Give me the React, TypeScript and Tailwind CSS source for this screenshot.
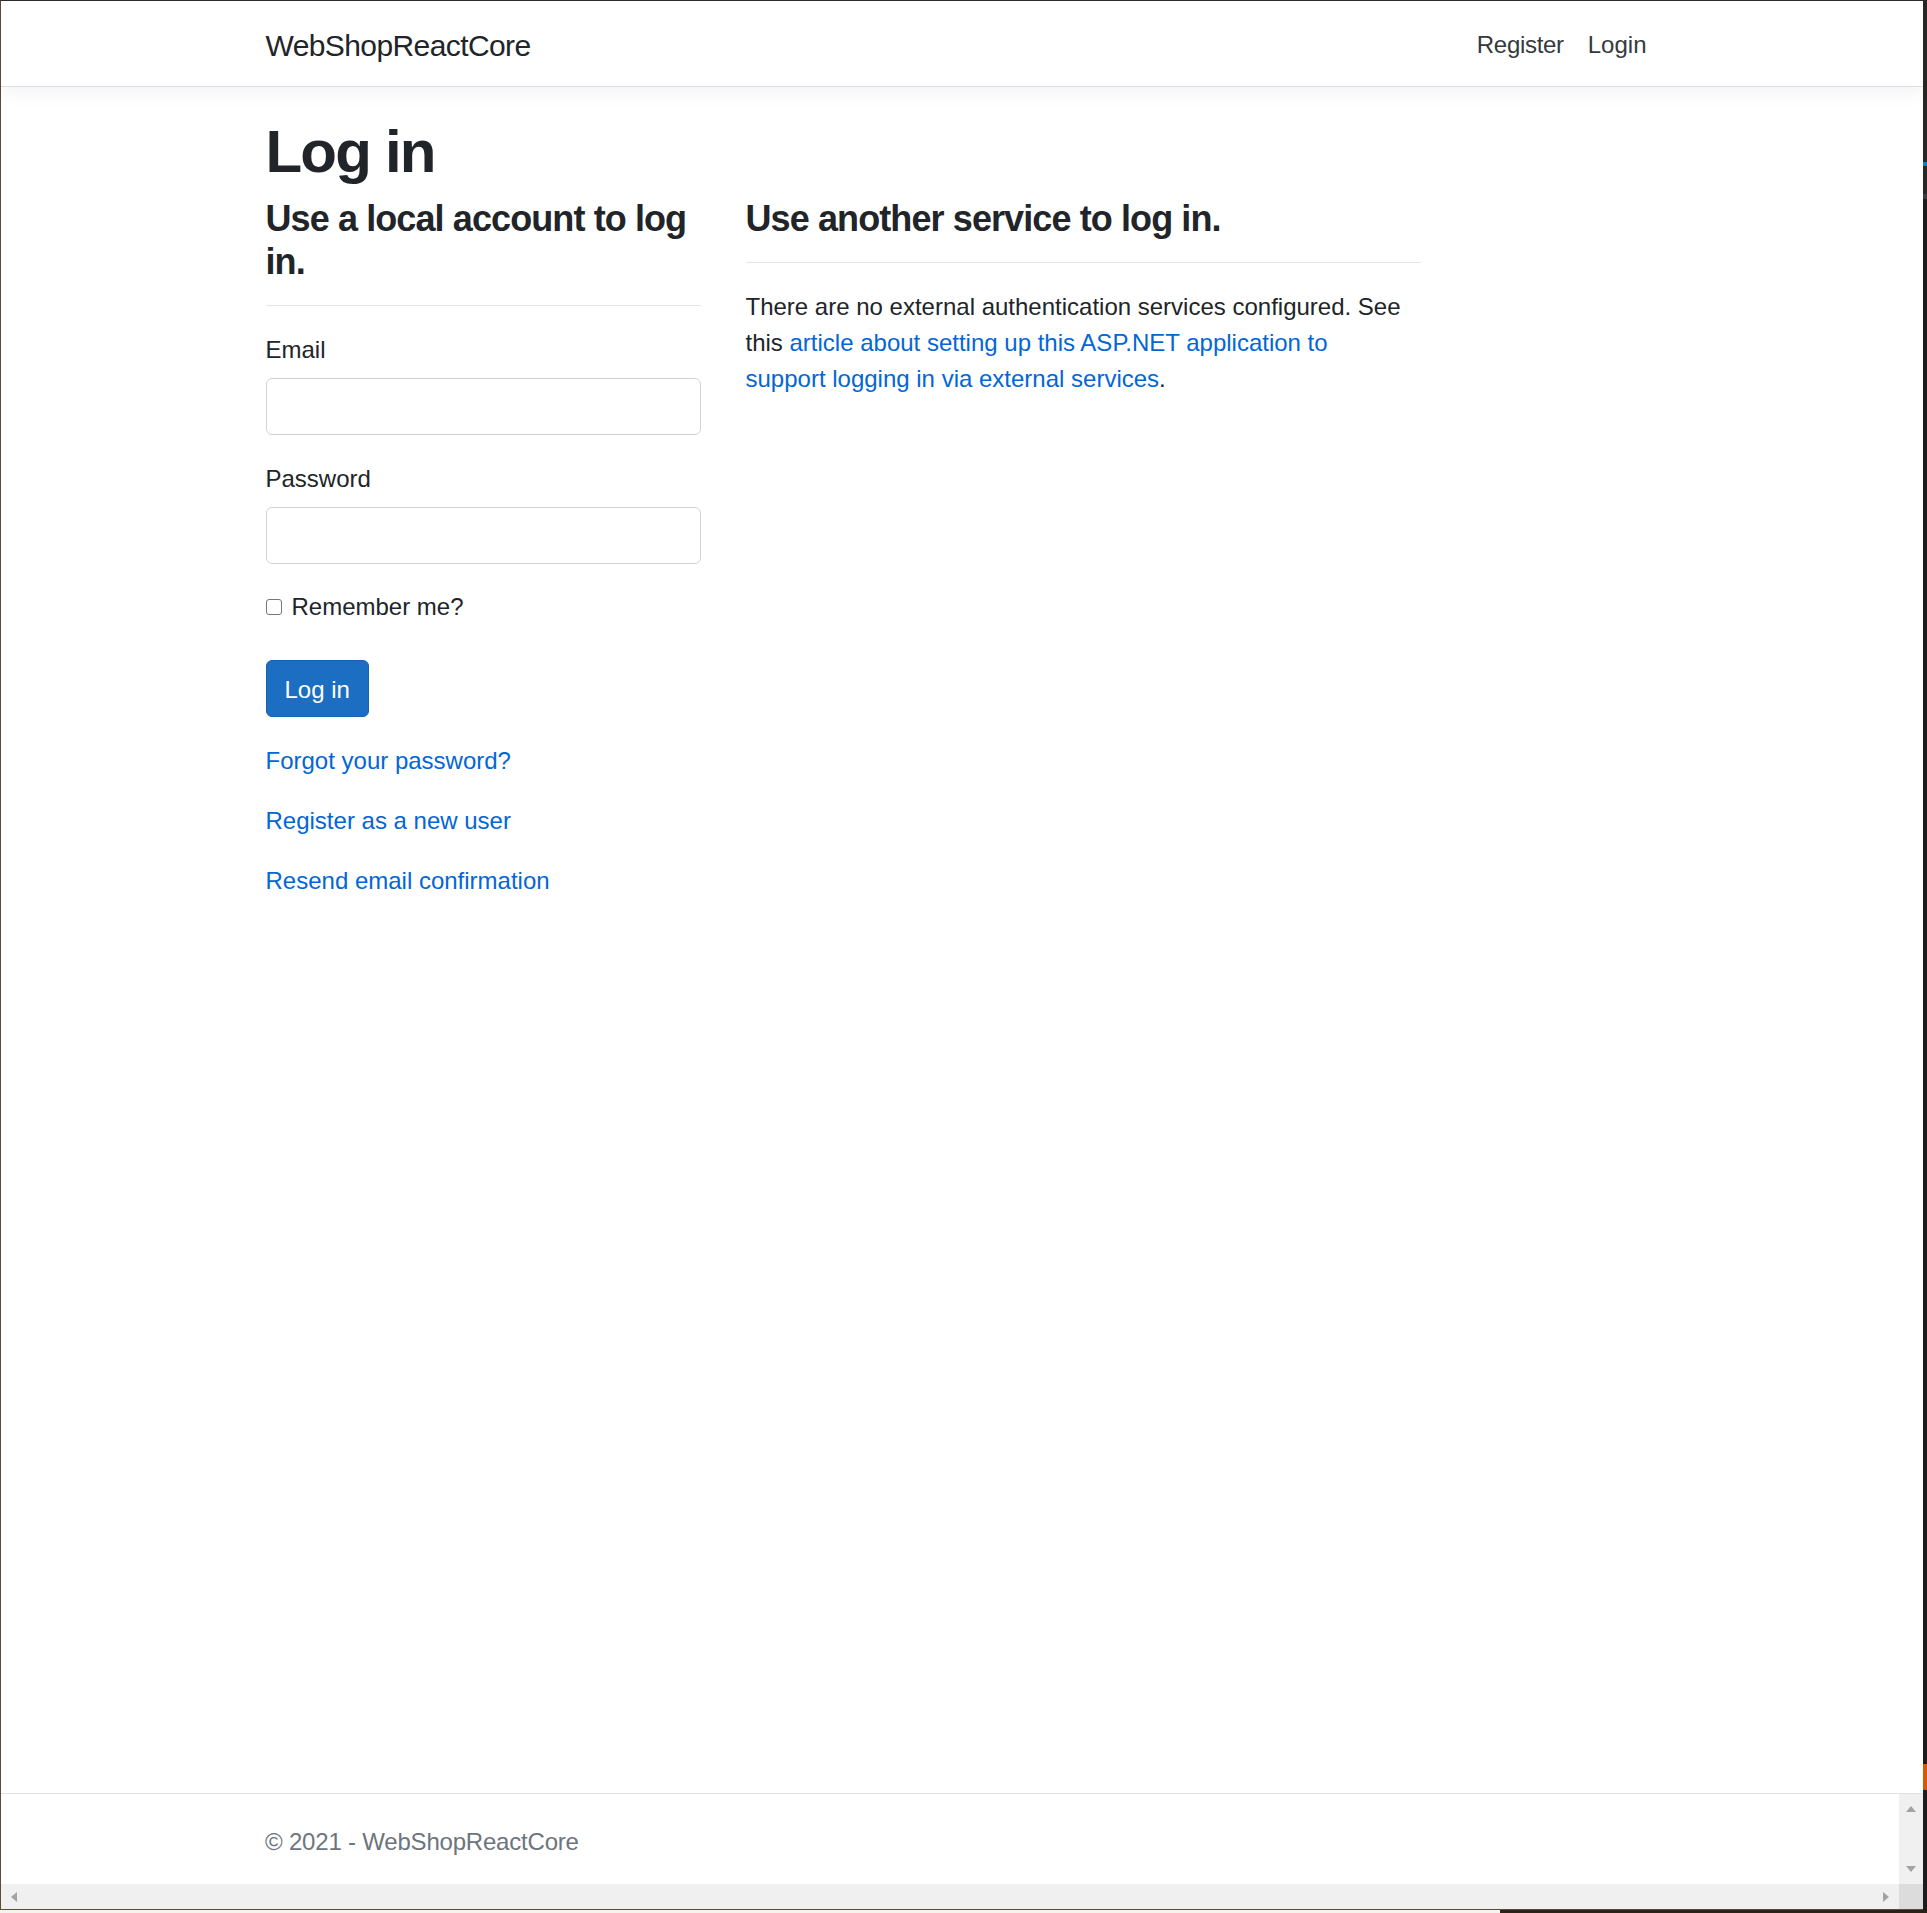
import React from "react";

const font = { fontFamily: "'Liberation Sans', Arial, sans-serif" };

function ScrollArrow({ dir }: { dir: "up" | "down" | "left" | "right" }) {
  const pts: Record<string, string> = {
    up: "0,6 5,0 10,6",
    down: "0,0 10,0 5,6",
    left: "6,0 6,10 0,5",
    right: "0,0 6,5 0,10",
  };
  const vertical = dir === "up" || dir === "down";
  return (
    <svg width={vertical ? 10 : 6} height={vertical ? 6 : 10} viewBox={vertical ? "0 0 10 6" : "0 0 6 10"}>
      <polygon points={pts[dir]} fill="#a3a3a3" />
    </svg>
  );
}

export default function App() {
  return (
    <div className="w-[1927px] h-[1913px] bg-[#f4f3ef] flex flex-col" style={font}>
      <div className="flex h-[1910px]">
        {/* browser window */}
        <div className="w-[1923px] h-[1910px] border-l border-t border-b border-l-[#5c4a33] border-t-[#2b2b2b] border-b-[#5c4a33] bg-white flex flex-col">
          {/* Navbar */}
          <header className="h-[86px] shrink-0 border-b border-[#dfdde6] bg-white shadow-[0_6px_18px_rgba(0,0,0,0.05)] relative z-10">
            <div className="mx-auto w-[1393px] h-full flex items-center justify-between">
              <a className="text-[30px] leading-[45px] text-[#212529] pt-[4px] tracking-[-0.6px]">WebShopReactCore</a>
              <ul className="flex pt-[2px]">
                <li>
                  <a className="block px-[12px] text-[24px] leading-[36px] text-[#343a40] tracking-[-0.3px]">Register</a>
                </li>
                <li>
                  <a className="block px-[12px] text-[24px] leading-[36px] text-[#343a40]">Login</a>
                </li>
              </ul>
            </div>
          </header>

          {/* Main */}
          <main className="mx-auto w-[1393px] pt-[24px] text-[#212529]">
            <h1 className="text-[60px] leading-[72px] font-semibold tracking-[-0.03em] pt-[5px] mb-[7px]">Log in</h1>
            <div className="flex gap-[45px]">
              <section className="w-[435px]">
                <h4 className="text-[36px] leading-[43.2px] font-semibold tracking-[-0.025em] pt-[2px]">
                  Use a local account to log in.
                </h4>
                <hr className="mt-[22px] mb-[24px] border-t border-[#e5e5e5]" />
                <div className="mb-[24px]">
                  <label className="block text-[24px] leading-[36px] pt-[2px] mb-[10px]">Email</label>
                  <input className="block w-full h-[57px] border border-[#ced4da] rounded-[6px] px-[18px] text-[24px]" />
                </div>
                <div className="mb-[24px]">
                  <label className="block text-[24px] leading-[36px] pt-[2px] mb-[10px]">Password</label>
                  <input type="password" className="block w-full h-[57px] border border-[#ced4da] rounded-[6px] px-[18px] text-[24px]" />
                </div>
                <div className="mb-[24px] pb-[12px]">
                  <label className="flex items-center gap-[10px] text-[24px] leading-[36px] pt-[2px] h-[36px]">
                    <input type="checkbox" className="appearance-none w-[16px] h-[16px] border border-[#767676] rounded-[3px] bg-white" />
                    Remember me?
                  </label>
                </div>
                <div className="mb-[24px]">
                  <button className="h-[57px] px-[18px] bg-[#1b6ec2] border border-[#1861ac] rounded-[6px] text-white text-[24px] leading-[36px] pt-[2px]">
                    Log in
                  </button>
                </div>
                <div className="text-[24px] leading-[36px] text-[#0366d6]">
                  <p className="mb-[24px] pt-[2px] h-[36px]">
                    <a>Forgot your password?</a>
                  </p>
                  <p className="mb-[24px] pt-[2px] h-[36px]">
                    <a>Register as a new user</a>
                  </p>
                  <p className="mb-[24px] pt-[2px] h-[36px]">
                    <a>Resend email confirmation</a>
                  </p>
                </div>
              </section>

              <section className="w-[675px]">
                <h4 className="text-[36px] leading-[43.2px] font-semibold tracking-[-0.025em] pt-[2px]">
                  Use another service to log in.
                </h4>
                <hr className="mt-[22px] mb-[24px] border-t border-[#e5e5e5]" />
                <p className="text-[24px] leading-[36px] pt-[2px]">
                  There are no external authentication services configured. See
                  <br />
                  this <a className="text-[#0366d6]">article about setting up this ASP.NET application to</a>
                  <br />
                  <a className="text-[#0366d6]">support logging in via external services</a>.
                </p>
              </section>
            </div>
          </main>

          <div className="flex-1" />

          {/* Footer */}
          <footer className="h-[91px] shrink-0 border-t border-[#e2e2e2] flex">
            <div className="flex-1 pl-[264px] pt-[5px] text-[24px] leading-[85px] text-[#6c757d] whitespace-nowrap tracking-[-0.2px]">
              © 2021 - WebShopReactCore
            </div>
            <div className="w-[24px] bg-[#f0f0f0] flex flex-col items-center justify-between py-[12px]">
              <ScrollArrow dir="up" />
              <ScrollArrow dir="down" />
            </div>
          </footer>

          {/* horizontal scrollbar */}
          <div className="h-[25px] shrink-0 flex">
            <div className="flex-1 bg-[#f0f0f0] flex items-center justify-between pl-[10px] pr-[10px]">
              <ScrollArrow dir="left" />
              <ScrollArrow dir="right" />
            </div>
            <div className="w-[24px] bg-[#dcdcdc]" />
          </div>
        </div>

        {/* desktop strip to the right */}
        <div className="w-[4px] h-full bg-[#2a2723] flex flex-col">
          <div className="h-[162px]" />
          <div className="h-[4px] bg-[#0a7fd6]" />
          <div className="h-[28px]" />
          <div className="h-[5px] bg-[#3a3a40]" />
          <div className="flex-1 bg-[#1c1b1d]" />
          <div className="h-[26px] bg-[#d35a00]" />
          <div className="h-[120px] bg-[#1c1b1d]" />
        </div>
      </div>
      <div className="flex-1 flex">
        <div className="w-[1500px] bg-[#f4f3ef]" />
        <div className="flex-1 bg-[#2a2118]" />
      </div>
    </div>
  );
}
